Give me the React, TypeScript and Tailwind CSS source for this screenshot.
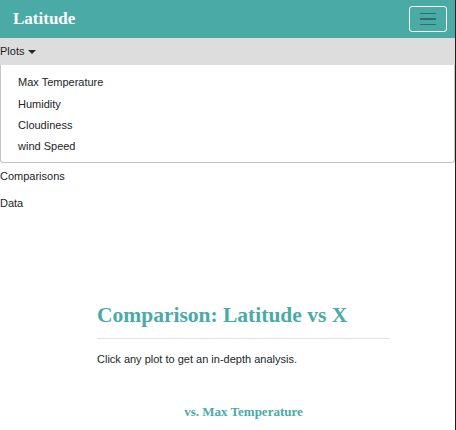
import React from "react";

const plots = ["Max Temperature", "Humidity", "Cloudiness", "wind Speed"];

export default function App() {
  return (
    <div className="flex min-h-[430px] w-[456px] bg-white font-['Liberation_Sans',Arial,sans-serif] text-[11px] text-[#212529]">
      <div className="flex w-[455px] flex-col">
        <nav className="flex h-[38px] items-center justify-between bg-[#4aaba6] pl-[13px] pr-[8px]">
          <span className="font-['Liberation_Serif',serif] text-[17px] font-bold text-white">
            Latitude
          </span>
          <button className="flex h-[26px] w-[38px] flex-col items-center justify-center gap-[4px] rounded-[3px] border border-white">
            <span className="block h-[1.5px] w-[16px] bg-[#2f6d6a]" />
            <span className="block h-[1.5px] w-[16px] bg-[#2f6d6a]" />
            <span className="block h-[1.5px] w-[16px] bg-[#2f6d6a]" />
          </button>
        </nav>

        <div className="flex h-[27px] items-center gap-[4px] bg-[#dddddd]">
          <span>Plots</span>
          <span className="h-0 w-0 border-x-[4px] border-t-[4px] border-x-transparent border-t-[#212529]" />
        </div>

        <ul className="rounded-b-[3px] border border-t-0 border-[#c4c4c4] pt-[7px] pb-[5px]">
          {plots.map((p) => (
            <li key={p} className="flex h-[21.3px] items-center pl-[17px]">
              {p}
            </li>
          ))}
        </ul>

        <div className="flex h-[27px] items-center">Comparisons</div>
        <div className="flex h-[27px] items-center">Data</div>

        <div className="ml-[97px] mt-[84px] w-[293px]">
          <h1 className="font-['Liberation_Serif',serif] text-[21.5px] leading-[28px] font-bold text-[#4aaba6]">
            Comparison: Latitude vs X
          </h1>
          <hr className="mt-[9px] border-[#e3e3e3]" />
          <p className="mt-[12px]">Click any plot to get an in-depth analysis.</p>
          <h3 className="mt-[34px] text-center font-['Liberation_Serif',serif] text-[13px] font-bold text-[#4aaba6]">
            vs. Max Temperature
          </h3>
        </div>
      </div>
      <div className="w-[1px] bg-[#1e1e1e]" />
    </div>
  );
}
